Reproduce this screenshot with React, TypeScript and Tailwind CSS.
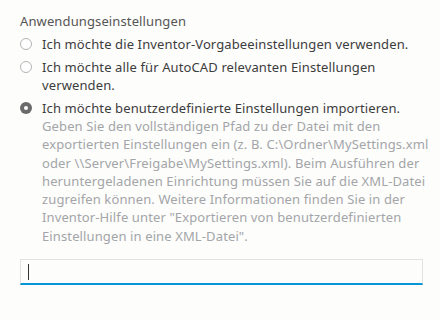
import React, { useState } from 'react';

const options = [
  { id: 'inventor', lines: ['Ich möchte die Inventor-Vorgabeeinstellungen verwenden.'] },
  { id: 'autocad', lines: ['Ich möchte alle für AutoCAD relevanten Einstellungen', 'verwenden.'] },
  { id: 'custom', lines: ['Ich möchte benutzerdefinierte Einstellungen importieren.'] },
];

const help = [
  'Geben Sie den vollständigen Pfad zu der Datei mit den',
  'exportierten Einstellungen ein (z. B. C:\\Ordner\\MySettings.xml',
  'oder \\\\Server\\Freigabe\\MySettings.xml). Beim Ausführen der',
  'heruntergeladenen Einrichtung müssen Sie auf die XML-Datei',
  'zugreifen können. Weitere Informationen finden Sie in der',
  'Inventor-Hilfe unter "Exportieren von benutzerdefinierten',
  'Einstellungen in eine XML-Datei".',
];

function Radio({ checked }: { checked: boolean }) {
  return checked ? (
    <span className="mt-[3px] flex h-[12px] w-[12px] shrink-0 items-center justify-center rounded-full bg-[#6b6b6b]">
      <span className="h-[4px] w-[4px] rounded-full bg-white" />
    </span>
  ) : (
    <span className="mt-[3px] h-[12px] w-[12px] shrink-0 rounded-full border border-[#b4b4b4] bg-white" />
  );
}

export default function App() {
  const [selected, setSelected] = useState('custom');

  return (
    <div
      className="h-[320px] w-[440px] bg-[#fdfdfc] px-[20px] pt-[12px] text-[13px] leading-[18px] tracking-[0.12px]"
      style={{ fontFamily: '"Noto Sans", "Open Sans", sans-serif' }}
    >
      <div className="text-[#555555]">Anwendungseinstellungen</div>
      <div className="mt-[5px] flex flex-col gap-[5px]">
        {options.map((o) => (
          <div key={o.id}>
            <label
              className="flex cursor-pointer gap-[10px] text-[#3c3c3c]"
              onClick={() => setSelected(o.id)}
            >
              <Radio checked={selected === o.id} />
              <span className="whitespace-nowrap">
                {o.lines.map((l) => (
                  <span key={l} className="block">{l}</span>
                ))}
              </span>
            </label>
            {o.id === 'custom' && (
              <p className="ml-[22px] whitespace-nowrap leading-[18.3px] text-[#a3a5a8]">
                {help.map((l) => (
                  <span key={l} className="block">{l}</span>
                ))}
              </p>
            )}
          </div>
        ))}
      </div>
      <div className="mt-[14px] mr-[-3px] flex h-[26px] items-center border border-b-2 border-[#e2e2e2] border-b-[#0696d7] bg-[#fdfdfc] pl-[7px]">
        <span className="h-[16px] w-[1px] bg-[#333333]" />
      </div>
    </div>
  );
}
